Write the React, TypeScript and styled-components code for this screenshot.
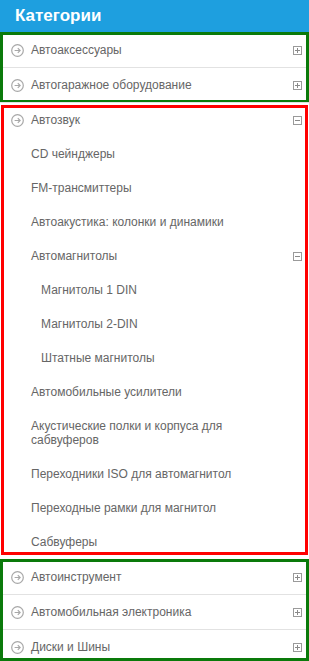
import React from 'react'
import styled, {createGlobalStyle} from 'styled-components'

type Tone = 'green' | 'red'

type Node = {
  title: string
  open?: boolean
  children?: Node[]
}

const topBefore: Node[] = [{title: 'Автоаксессуары'}, {title: 'Автогаражное оборудование'}]

const audio: Node = {
  title: 'Автозвук',
  open: true,
  children: [
    {title: 'CD чейнджеры'},
    {title: 'FM-трансмиттеры'},
    {title: 'Автоакустика: колонки и динамики'},
    {
      title: 'Автомагнитолы',
      open: true,
      children: [{title: 'Магнитолы 1 DIN'}, {title: 'Магнитолы 2-DIN'}, {title: 'Штатные магнитолы'}],
    },
    {title: 'Автомобильные усилители'},
    {title: 'Акустические полки и корпуса для сабвуферов'},
    {title: 'Переходники ISO для автомагнитол'},
    {title: 'Переходные рамки для магнитол'},
    {title: 'Сабвуферы'},
  ],
}

const topAfter: Node[] = [
  {title: 'Автоинструмент'},
  {title: 'Автомобильная электроника'},
  {title: 'Диски и Шины'},
]

function ArrowIcon() {
  return (
    <svg width="13" height="13" viewBox="0 0 13 13">
      <circle cx="6.5" cy="6.5" r="5.8" fill="none" stroke="#a8a8a8" strokeWidth="1.2" />
      <path d="M3.6 6.5h5.4M6.8 4.2l2.3 2.3-2.3 2.3" fill="none" stroke="#a8a8a8" strokeWidth="1.2" />
    </svg>
  )
}

function ToggleIcon({open}: {open?: boolean}) {
  return (
    <Toggle>
      <svg width="9" height="9" viewBox="0 0 9 9">
        <rect x="0.5" y="0.5" width="8" height="8" fill="#fff" stroke="#9a9a9a" />
        <path d={open ? 'M2 4.5h5' : 'M2 4.5h5M4.5 2v5'} stroke="#8a8a8a" />
      </svg>
    </Toggle>
  )
}

function SubList({items, level}: {items: Node[]; level: number}) {
  return (
    <>
      {items.map(item => (
        <React.Fragment key={item.title}>
          <SubRow $level={level}>
            <SubTitle>{item.title}</SubTitle>
            {item.children && <ToggleIcon open={item.open} />}
          </SubRow>
          {item.children && item.open && <SubList items={item.children} level={level + 1} />}
        </React.Fragment>
      ))}
    </>
  )
}

function TopEntry({item}: {item: Node}) {
  return (
    <TopItem>
      <TopRow>
        <ArrowIcon />
        <TopTitle>{item.title}</TopTitle>
        <ToggleIcon open={item.open} />
      </TopRow>
      {item.children && item.open && <SubList items={item.children} level={0} />}
    </TopItem>
  )
}

export default function App() {
  return (
    <>
      <GlobalStyle />
      <Sidebar>
        <Header>Категории</Header>
        <Group $tone="green" $inset="0 0 -1px 0">
          {topBefore.map(item => (
            <TopEntry key={item.title} item={item} />
          ))}
        </Group>
        <Group $tone="red" $inset="3px 1px 4px 1px">
          <TopEntry item={audio} />
        </Group>
        <Group $tone="green" $inset="0 0 3px 0">
          {topAfter.map(item => (
            <TopEntry key={item.title} item={item} />
          ))}
        </Group>
      </Sidebar>
    </>
  )
}

const GlobalStyle = createGlobalStyle`
  html, body {
    margin: 0;
    padding: 0;
    background: #fff;
    font-family: "Liberation Sans", Arial, sans-serif;
  }
`

const Sidebar = styled.aside`
  width: 309px;
  overflow: hidden;
`

const Header = styled.h2`
  margin: 0;
  height: 32px;
  padding-left: 15px;
  background: #1e9fdf;
  color: #fff;
  font-size: 17px;
  font-weight: bold;
  line-height: 31px;
`

const Group = styled.div<{$tone: Tone; $inset: string}>`
  position: relative;

  &::after {
    content: '';
    position: absolute;
    inset: ${props => props.$inset};
    border: 3px solid ${props => (props.$tone === 'red' ? '#ff0000' : '#0a7a0a')};
    pointer-events: none;
  }
`

const TopItem = styled.div`
  border-top: 1px solid #e2e2e2;
`

const TopRow = styled.div`
  display: flex;
  align-items: center;
  gap: 7px;
  height: 34px;
  padding: 0 7px 0 11px;
`

const TopTitle = styled.span`
  flex: 1;
  font-size: 12px;
  color: #666;
`

const Toggle = styled.span`
  display: flex;
  margin-left: auto;
`

const SubRow = styled.div<{$level: number}>`
  display: flex;
  align-items: center;
  padding: 10px 7px 10px ${props => 31 + props.$level * 10}px;
`

const SubTitle = styled.span`
  flex: 0 1 240px;
  font-size: 12px;
  line-height: 14px;
  color: #666;
`
